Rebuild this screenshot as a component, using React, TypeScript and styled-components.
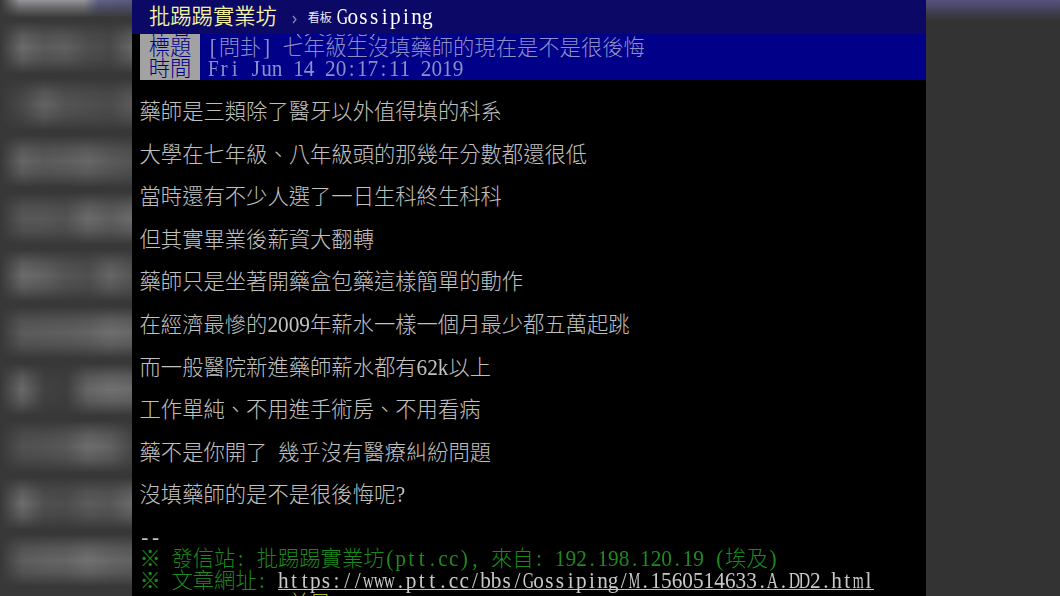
import * as React from 'react';
import styled, { createGlobalStyle } from 'styled-components';

const colors = {
  navy: '#000088',
  topbar: '#0b0866',
  label: '#a2a2a2',
  meta: '#8e8ec6',
  text: '#c0c0c0',
  green: '#1d8a1d',
  yellow: '#f3f3a0',
};

const cell = 21.3;

const GlobalStyle = createGlobalStyle`
  body {
    margin: 0;
    background: #000;
    overflow: hidden;
  }
`

const Page = styled.div`
  display: flex;
  width: 1060px;
  height: 596px;
  overflow: hidden;
  font-family: 'Liberation Serif', 'Noto Sans CJK TC', serif;
  font-size: ${cell}px;
  font-weight: 300;
  line-height: 23.6px;
  white-space: pre;
`

const LeftSide = styled.div`
  width: 132px;
  flex: none;
  overflow: hidden;
  background: #383838;
`

const LeftTop = styled.div`
  height: 19px;
  background: linear-gradient(90deg, #383838 0, #96969a 20px, #96969a 84px, #62628a 98px, #5c5c84 132px);
  mask-image: linear-gradient(#000 0, rgba(0, 0, 0, 0.5) 8px, transparent 18px);
`

const Smear = styled.div<{ $tones: number[] }>`
  height: 57px;
  background: linear-gradient(90deg, ${p => [0, ...p.$tones].map(t => `rgba(255, 255, 255, ${t / 100})`).join(', ')});
  mask-image: linear-gradient(transparent 4%, rgba(0, 0, 0, 0.7) 29%, #000 50%, rgba(0, 0, 0, 0.7) 71%, transparent 96%);
`

const RightSide = styled.div`
  flex: 1;
  background: linear-gradient(#56527c 0, #4b496a 6px, #3a3a44 15px, #333333 22px);
`

const Screen = styled.main`
  display: flex;
  flex-direction: column;
  width: 794px;
  flex: none;
  overflow: hidden;
  background: #000;
`

const TopBar = styled.header`
  display: flex;
  align-items: center;
  height: 34.4px;
  box-sizing: border-box;
  flex: none;
  padding: 1px 0 0 17px;
  background: ${colors.topbar};
`

const SiteName = styled.span`
  font-weight: 350;
  color: ${colors.yellow};
`

const Arrow = styled.svg`
  width: 6px;
  height: 9px;
  margin: 4px 10px 0 15px;
  fill: none;
  stroke: #8c8cb4;
  stroke-width: 1.2;
`

const BoardLabel = styled.small`
  margin-right: 5px;
  padding-top: 2px;
  font-size: 12px;
  font-weight: 400;
  color: #e8e8f4;
`

const BoardName = styled.span`
  color: #fff;
`

const MetaList = styled.section`
  display: flex;
  flex-direction: column;
  justify-content: flex-end;
  height: 45.3px;
  flex: none;
  overflow: hidden;
  margin-left: 8px;
  background: ${colors.navy};
`

const MetaRow = styled.div`
  display: flex;
  height: ${cell}px;
  flex: none;
`

const MetaLabel = styled.span`
  width: 60px;
  margin-right: 8px;
  flex: none;
  text-align: center;
  background: ${colors.label};
  color: ${colors.navy};
`

const MetaValue = styled.span`
  color: ${colors.meta};
`

const Article = styled.article`
  padding: ${cell}px 0 0 7.5px;
  color: ${colors.text};
`

const Line = styled.p`
  margin: 0 0 ${cell}px;
  height: ${cell}px;
`

const Footer = styled.footer`
  color: ${colors.green};
`

const FooterLine = styled.div`
  height: ${cell}px;
`

const Dashes = styled(FooterLine)`
  color: ${colors.text};
`

const Push = styled(FooterLine)`
  padding: 2px 0 0 149px;
  color: #b8b830;
`

const Url = styled.a`
  display: inline-block;
  height: 20.6px;
  color: #c8c8c8;
  background: linear-gradient(#c4c4c4, #c4c4c4) bottom / 100% 1.4px no-repeat;
`

const Half = styled.span<{ $squeeze: number }>`
  display: inline-flex;
  justify-content: center;
  width: ${cell / 2}px;
  transform: scale(${p => p.$squeeze}, 1.06);
`

// glyphs wider than half an em are narrowed to fit the terminal grid
const squeeze: { [char: string]: number } = {
  G: 0.74, w: 0.72, M: 0.62, A: 0.74, D: 0.74, m: 0.66, F: 0.9,
};

const Grid = ({ children }: { children: string }) => (
  <>
    {Array.from(children).map((char, i) => (
      char.charCodeAt(0) < 128
        ? <Half key={i} $squeeze={squeeze[char] || 1}>{char}</Half>
        : char
    ))}
  </>
)

const smears = [
  [26, 18, 20, 12, 9, 24],
  [9, 22, 14, 12, 10, 18],
  [23, 18, 20, 24, 18, 14],
  [16, 16, 14, 26, 20, 26],
  [26, 22, 15, 12, 23, 15],
  [18, 19, 20, 22, 28, 24],
  [25, 5, 3, 24, 29, 26],
  [13, 14, 17, 27, 22, 8],
  [27, 12, 11, 18, 16, 26],
  [19, 22, 23, 29, 24, 21],
];

const paragraphs = [
  '藥師是三類除了醫牙以外值得填的科系',
  '大學在七年級、八年級頭的那幾年分數都還很低',
  '當時還有不少人選了一日生科終生科科',
  '但其實畢業後薪資大翻轉',
  '藥師只是坐著開藥盒包藥這樣簡單的動作',
  '在經濟最慘的2009年薪水一樣一個月最少都五萬起跳',
  '而一般醫院新進藥師薪水都有62k以上',
  '工作單純、不用進手術房、不用看病',
  '藥不是你開了 幾乎沒有醫療糾紛問題',
  '沒填藥師的是不是很後悔呢?',
];

const App = () => (
  <Page>
    <GlobalStyle />
    <LeftSide>
      <LeftTop />
      {smears.map((tones, i) => <Smear key={i} $tones={tones} />)}
    </LeftSide>
    <Screen>
      <TopBar>
        <SiteName>批踢踢實業坊</SiteName>
        <Arrow viewBox="0 0 6 9"><path d="M1 1l3 3.5L1 8" /></Arrow>
        <BoardLabel>看板</BoardLabel>
        <BoardName><Grid>Gossiping</Grid></BoardName>
      </TopBar>
      <MetaList>
        <MetaRow>
          <MetaLabel>作者</MetaLabel>
          <MetaValue><Grid>{'        (天兒兄)'}</Grid></MetaValue>
        </MetaRow>
        <MetaRow>
          <MetaLabel>標題</MetaLabel>
          <MetaValue><Grid>[問卦] 七年級生沒填藥師的現在是不是很後悔</Grid></MetaValue>
        </MetaRow>
        <MetaRow>
          <MetaLabel>時間</MetaLabel>
          <MetaValue><Grid>Fri Jun 14 20:17:11 2019</Grid></MetaValue>
        </MetaRow>
      </MetaList>
      <Article>
        {paragraphs.map(text => <Line key={text}><Grid>{text}</Grid></Line>)}
        <Footer>
          <Dashes><Grid>--</Grid></Dashes>
          <FooterLine><Grid>※ 發信站: 批踢踢實業坊(ptt.cc), 來自: 192.198.120.19 (埃及)</Grid></FooterLine>
          <FooterLine>
            <Grid>{'※ 文章網址: '}</Grid>
            <Url href="#"><Grid>https://www.ptt.cc/bbs/Gossiping/M.1560514633.A.DD2.html</Grid></Url>
          </FooterLine>
          <Push>前是</Push>
        </Footer>
      </Article>
    </Screen>
    <RightSide />
  </Page>
)

export default App;
